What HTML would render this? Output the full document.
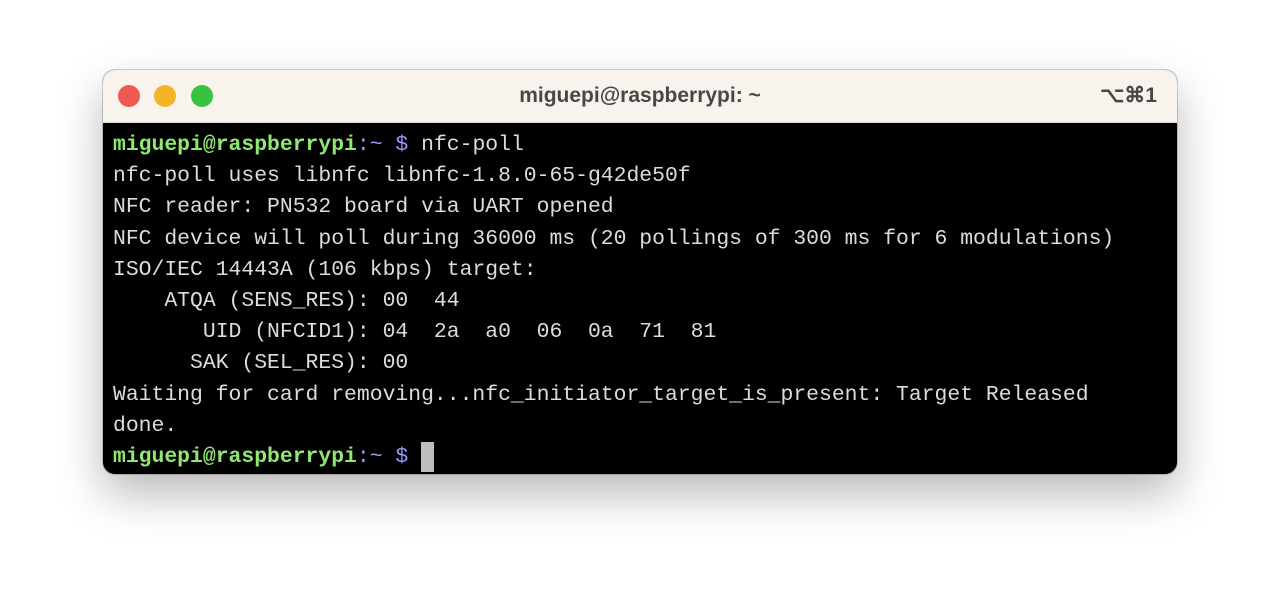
<!DOCTYPE html>
<html><head><style>
body{margin:0;width:1280px;height:611px;background:#fff;overflow:hidden;font-family:"Liberation Sans",sans-serif}
.win{position:absolute;left:103px;top:70px;width:1074px;height:404px;border-radius:12px;overflow:hidden;background:#000;box-shadow:0 20px 45px rgba(0,0,0,.28),0 0 0 1px rgba(0,0,0,.18)}
.tb{height:52px;background:#f9f3ee;border-bottom:1px solid #d9d4cf;position:relative}
.d{position:absolute;top:15px;width:22px;height:22px;border-radius:50%}
.t{position:absolute;left:0;right:0;top:14px;text-align:center;font-weight:bold;font-size:21px;color:#4a4645}
.k{position:absolute;right:20px;top:13px;font-weight:bold;font-size:21px;color:#4a4645}
pre{margin:0;position:absolute;left:10px;top:60px;font-family:"Liberation Mono",monospace;font-size:21.4px;line-height:31.2px;color:#dcdcdc}
.g{color:#8fe870;font-weight:bold}.p{color:#9a96ff}
.c{display:inline-block;width:13px;height:30px;background:#bdbdbd;vertical-align:top}
</style></head><body>
<div class="win">
<div class="tb">
<div class="d" style="left:15px;background:#ee5a52"></div>
<div class="d" style="left:51px;background:#f5b428"></div>
<div class="d" style="left:88px;background:#37c33f"></div>
<div class="t">miguepi@raspberrypi: ~</div>
<div class="k">⌥⌘1</div>
</div>
<pre><span class="g">miguepi@raspberrypi</span><span class="p">:~ $</span> nfc-poll
nfc-poll uses libnfc libnfc-1.8.0-65-g42de50f
NFC reader: PN532 board via UART opened
NFC device will poll during 36000 ms (20 pollings of 300 ms for 6 modulations)
ISO/IEC 14443A (106 kbps) target:
    ATQA (SENS_RES): 00  44
       UID (NFCID1): 04  2a  a0  06  0a  71  81
      SAK (SEL_RES): 00
Waiting for card removing...nfc_initiator_target_is_present: Target Released
done.
<span class="g">miguepi@raspberrypi</span><span class="p">:~ $</span> <span class="c"></span></pre>
</div>
</body></html>
